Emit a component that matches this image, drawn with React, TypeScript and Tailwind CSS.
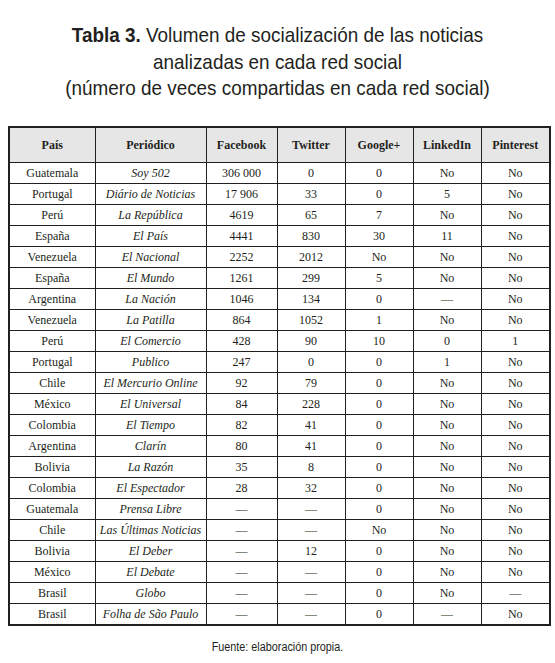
import React from "react"

// País, Periódico, Facebook, Twitter, Google+, LinkedIn, Pinterest
const rows: string[][] = [
    ["Guatemala", "Soy 502", "306 000", "0", "0", "No", "No"],
    ["Portugal", "Diário de Noticias", "17 906", "33", "0", "5", "No"],
    ["Perú", "La República", "4619", "65", "7", "No", "No"],
    ["España", "El País", "4441", "830", "30", "11", "No"],
    ["Venezuela", "El Nacional", "2252", "2012", "No", "No", "No"],
    ["España", "El Mundo", "1261", "299", "5", "No", "No"],
    ["Argentina", "La Nación", "1046", "134", "0", "—", "No"],
    ["Venezuela", "La Patilla", "864", "1052", "1", "No", "No"],
    ["Perú", "El Comercio", "428", "90", "10", "0", "1"],
    ["Portugal", "Publico", "247", "0", "0", "1", "No"],
    ["Chile", "El Mercurio Online", "92", "79", "0", "No", "No"],
    ["México", "El Universal", "84", "228", "0", "No", "No"],
    ["Colombia", "El Tiempo", "82", "41", "0", "No", "No"],
    ["Argentina", "Clarín", "80", "41", "0", "No", "No"],
    ["Bolivia", "La Razón", "35", "8", "0", "No", "No"],
    ["Colombia", "El Espectador", "28", "32", "0", "No", "No"],
    ["Guatemala", "Prensa Libre", "—", "—", "0", "No", "No"],
    ["Chile", "Las Últimas Noticias", "—", "—", "No", "No", "No"],
    ["Bolivia", "El Deber", "—", "12", "0", "No", "No"],
    ["México", "El Debate", "—", "—", "0", "No", "No"],
    ["Brasil", "Globo", "—", "—", "0", "No", "—"],
    ["Brasil", "Folha de São Paulo", "—", "—", "0", "—", "No"],
]

const headers = ["País", "Periódico", "Facebook", "Twitter", "Google+", "LinkedIn", "Pinterest"]
const widths = ["w-[86px]", "w-[111px]", "w-[71px]", "w-[68px]", "w-[68px]", "w-[68px]", "w-[69px]"]

const narrow = { fontFamily: '"Liberation Sans", Arial, sans-serif' }

export default function App() {
    return (
        <div className="w-[555px] h-[663px] bg-white text-[#231f20] overflow-hidden">
            {/* Title - condensed look via horizontal scale */}
            <div className="pt-[22px] text-center text-[21px] leading-[26.5px] scale-x-[0.9]" style={narrow}>
                <p><span className="font-bold">Tabla 3.</span> Volumen de socialización de las noticias</p>
                <p>analizadas en cada red social</p>
                <p>(número de veces compartidas en cada red social)</p>
            </div>

            {/* Table */}
            <div className="mt-[24px] px-[8px]">
                <table
                    className="w-[541px] table-fixed border-collapse border-2 border-[#231f20] text-[12px]"
                    style={{ fontFamily: '"Liberation Serif", "DejaVu Serif", serif' }}
                >
                    <colgroup>
                        {widths.map((w, i) => (
                            <col key={i} className={w} />
                        ))}
                    </colgroup>
                    <thead>
                        <tr className="h-[36px] bg-[#e6e6e6]">
                            {headers.map((h) => (
                                <th key={h} className="border border-[#231f20] font-bold text-center p-0">
                                    {h}
                                </th>
                            ))}
                        </tr>
                    </thead>
                    <tbody>
                        {rows.map((r, i) => (
                            <tr key={i} className="h-[21px]">
                                {r.map((c, j) => (
                                    <td
                                        key={j}
                                        className={`border border-[#231f20] text-center p-0 leading-[20px] ${j === 1 ? "italic" : ""}`}
                                    >
                                        {c}
                                    </td>
                                ))}
                            </tr>
                        ))}
                    </tbody>
                </table>
            </div>

            {/* Source */}
            <p className="mt-[12px] text-center text-[12px] scale-x-[0.9]" style={narrow}>
                Fuente: elaboración propia.
            </p>
        </div>
    )
}
